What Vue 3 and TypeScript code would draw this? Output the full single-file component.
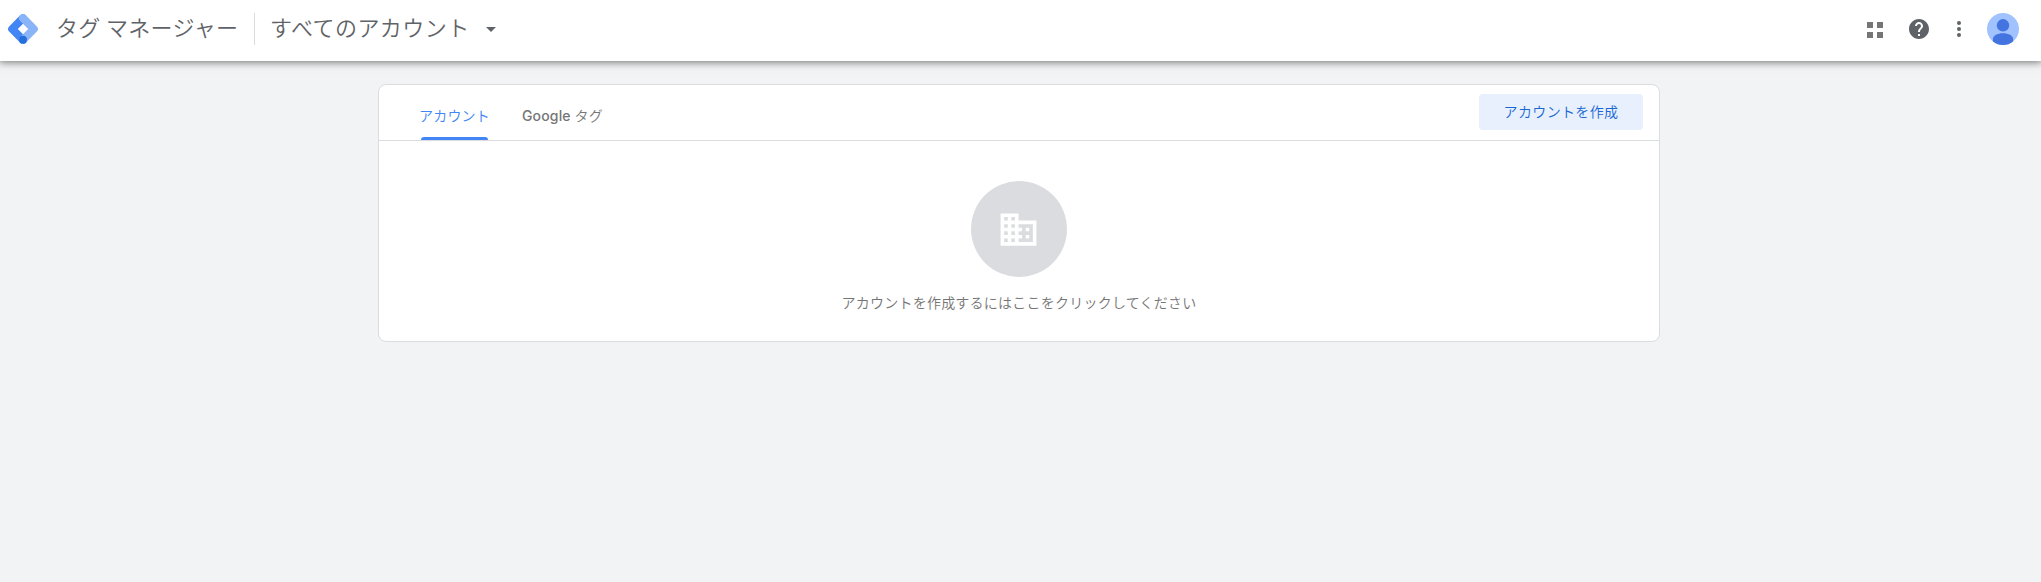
<script setup lang="ts">
import { ref } from 'vue'

interface Tab {
  id: string
  latin?: string
  label: string
}

const tabs: Tab[] = [
  { id: 'accounts', label: 'アカウント' },
  { id: 'google-tags', latin: 'Google', label: 'タグ' },
]
const activeTab = ref('accounts')
</script>

<template>
  <div class="page">
    <header class="header">
      <svg class="logo" viewBox="0 0 30 30" aria-hidden="true">
        <g fill="none" stroke-width="8" stroke-linecap="round" stroke-linejoin="round">
          <path d="M15 4.200 4.200 15 15 25.800" stroke="#4285f4" />
          <path d="M15 4.200 25.800 15 15 25.800" stroke="#8ab4f8" />
        </g>
        <circle cx="15" cy="25.800" r="4" fill="#246fdb" />
      </svg>
      <h1 class="product">タグ マネージャー</h1>
      <span class="separator"></span>
      <button class="account-picker" type="button">
        <span>すべてのアカウント</span>
        <svg class="caret" viewBox="0 0 10 5"><path d="M0 0h10L5 5z" /></svg>
      </button>
      <div class="actions">
        <svg class="icon-apps" viewBox="0 0 16 16">
          <path d="M0 0h6v6H0zM10 0h6v6h-6zM0 10h6v6H0zM10 10h6v6h-6z" />
        </svg>
        <svg class="icon-help" viewBox="0 0 24 24">
          <path d="M12 2C6.48 2 2 6.48 2 12s4.48 10 10 10 10-4.480 10-10S17.520 2 12 2zm1 17h-2v-2h2v2zm2.070-7.750l-.9.920C13.450 12.900 13 13.500 13 15h-2v-.5c0-1.100.450-2.100 1.170-2.830l1.240-1.260c.370-.360.590-.860.590-1.410 0-1.100-.9-2-2-2s-2 .9-2 2H8c0-2.210 1.790-4 4-4s4 1.790 4 4c0 .880-.360 1.680-.930 2.250z" />
        </svg>
        <svg class="icon-more" viewBox="0 0 4 16">
          <circle cx="2" cy="2" r="2" /><circle cx="2" cy="8" r="2" /><circle cx="2" cy="14" r="2" />
        </svg>
        <svg class="avatar" viewBox="0 0 32 32">
          <circle cx="16" cy="16" r="16" fill="#a0c2ff" />
          <circle cx="16" cy="12.300" r="6.200" fill="#4374e0" />
          <path d="M5.900 28.400V26c0-3.500 4.500-5.800 10.100-5.800S26.100 22.500 26.100 26v2.400A16 16 0 0 1 5.900 28.400z" fill="#4374e0" />
        </svg>
      </div>
    </header>

    <main class="card">
      <div class="toolbar">
        <nav class="tabs">
          <button
            v-for="tab in tabs"
            :key="tab.id"
            type="button"
            class="tab"
            :class="{ active: tab.id === activeTab }"
            @click="activeTab = tab.id"
          >
            <span><span v-if="tab.latin" class="latin">{{ tab.latin }}&nbsp;</span>{{ tab.label }}</span>
          </button>
        </nav>
        <button class="create" type="button">アカウントを作成</button>
      </div>
      <div class="empty">
        <div class="badge">
          <svg viewBox="0 0 24 24">
            <path d="M12 7V3H2v18h20V7H12zM6 19H4v-2h2v2zm0-4H4v-2h2v2zm0-4H4V9h2v2zm0-4H4V5h2v2zm4 12H8v-2h2v2zm0-4H8v-2h2v2zm0-4H8V9h2v2zm0-4H8V5h2v2zm10 12h-8v-2h2v-2h-2v-2h2v-2h-2V9h8v10zm-2-8h-2v2h2v-2zm0 4h-2v2h2v-2z" />
          </svg>
        </div>
        <p class="hint">アカウントを作成するにはここをクリックしてください</p>
      </div>
    </main>
  </div>
</template>

<style>
body {
  background: #f1f3f4;
}
</style>

<style scoped>
.page {
  min-height: 582px;
  background: #f1f3f4;
  font-family: Roboto, "Noto Sans CJK JP", sans-serif;
  font-weight: 350;
}
button {
  border: 0;
  padding: 0;
  background: none;
  font: inherit;
  color: inherit;
  white-space: nowrap;
}
svg {
  display: block;
  flex: none;
}
.header {
  display: flex;
  align-items: center;
  box-sizing: border-box;
  height: 61px;
  padding: 0 22px 3px 8px;
  background: #fff;
  color: #5f6368;
  fill: #5f6368;
  box-shadow: 0 0 8px 1px rgba(0, 0, 0, 0.55);
}
.logo {
  width: 30px;
  height: 30px;
}
.product {
  width: 198px;
  margin: 0 0 0 18px;
  font-size: 22px;
  font-weight: 350;
  line-height: 32px;
  letter-spacing: 0.35px;
  word-spacing: -0.5px;
  white-space: nowrap;
}
.separator {
  width: 1px;
  height: 32px;
  background: #dadce0;
}
.account-picker {
  display: flex;
  align-items: center;
  margin-left: 15px;
  font-size: 22px;
  line-height: 32px;
  letter-spacing: 0.45px;
}
.caret {
  width: 10px;
  height: 5px;
  margin: 0 0 0 16px;
}
.actions {
  display: flex;
  align-items: center;
  margin-left: auto;
}
.icon-apps {
  width: 16px;
  height: 16px;
  margin: 2px 24px 0 0;
  fill: #757575;
}
.icon-help {
  width: 24px;
  height: 24px;
  margin-right: 26px;
}
.icon-more {
  width: 4px;
  height: 16px;
  margin-right: 26px;
}
.avatar {
  width: 32px;
  height: 32px;
}
.card {
  box-sizing: border-box;
  width: 1282px;
  height: 258px;
  margin: 23px 0 0 378px;
  border: 1px solid #dadce0;
  border-radius: 8px;
  background: #fff;
}
.toolbar {
  display: flex;
  justify-content: space-between;
  height: 55px;
  padding: 0 16px 0 40px;
  border-bottom: 1px solid #dadce0;
}
.tabs {
  display: flex;
  gap: 32px;
  height: 55px;
}
.tab {
  display: flex;
  flex-direction: column;
  justify-content: flex-end;
  color: #757575;
  font-size: 14px;
  line-height: 20px;
  letter-spacing: 0.2px;
}
.latin {
  font-family: Inter, sans-serif;
  font-weight: 450;
  letter-spacing: 0.15px;
}
.tab::after {
  content: "";
  align-self: center;
  width: 67px;
  height: 3px;
  margin-top: 11px;
  border-radius: 3px 3px 0 0;
}
.tab.active {
  color: #4285f4;
}
.tab.active::after {
  background: #4285f4;
}
.create {
  width: 164px;
  height: 36px;
  margin-top: 9px;
  padding-bottom: 2px;
  border-radius: 4px;
  background: #e8f0fe;
  color: #1967d2;
  font-size: 14px;
  letter-spacing: 0.35px;
}
.empty {
  display: flex;
  flex-direction: column;
  align-items: center;
  padding-top: 40px;
}
.badge {
  display: flex;
  align-items: center;
  justify-content: center;
  width: 96px;
  height: 96px;
  border-radius: 50%;
  background: #dadce0;
}
.badge svg {
  width: 43px;
  height: 43px;
  margin-right: 1px;
  fill: #fff;
}
.hint {
  margin: 16px 0 0;
  color: #757575;
  font-size: 14px;
  line-height: 20px;
  letter-spacing: 0.23px;
}
</style>
